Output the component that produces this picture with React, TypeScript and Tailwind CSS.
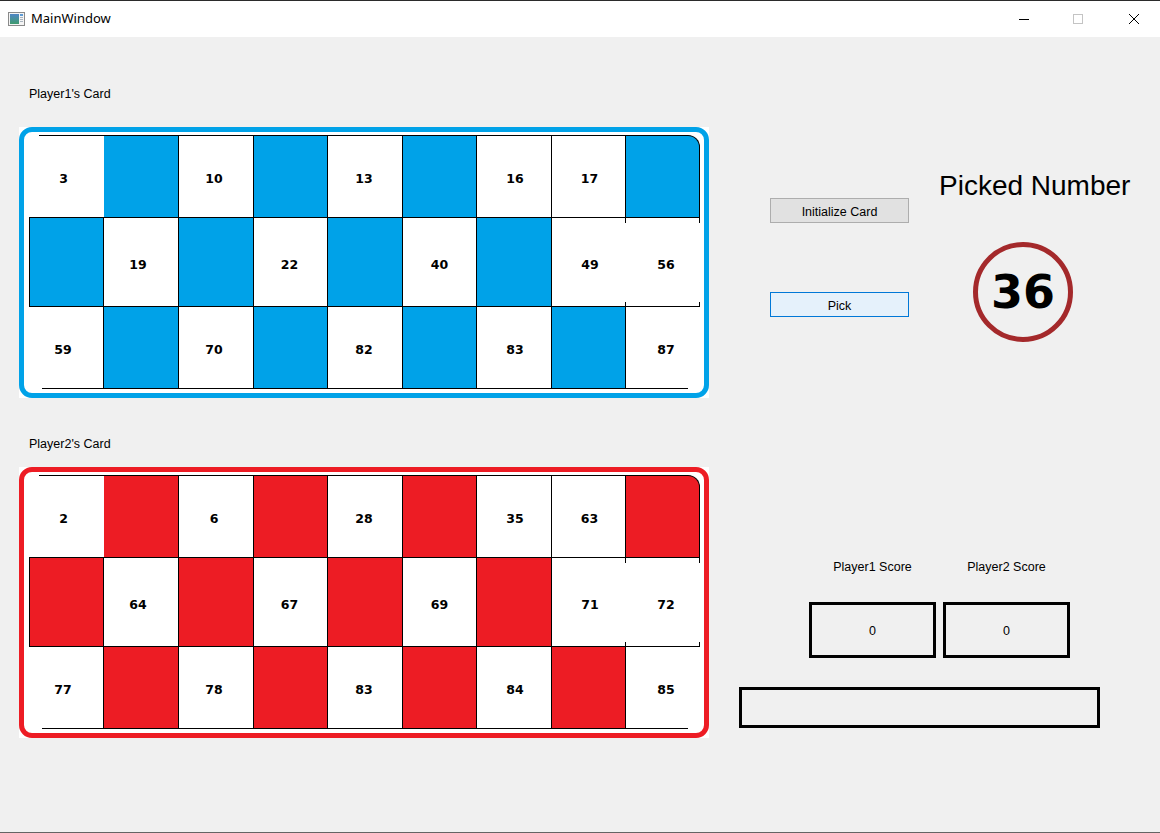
import React from "react";

type Cell = number | null;

const player1: Cell[][] = [
  [3, null, 10, null, 13, null, 16, 17, null],
  [null, 19, null, 22, null, 40, null, 49, 56],
  [59, null, 70, null, 82, null, 83, null, 87],
];

const player2: Cell[][] = [
  [2, null, 6, null, 28, null, 35, 63, null],
  [null, 64, null, 67, null, 69, null, 71, 72],
  [77, null, 78, null, 83, null, 84, null, 85],
];

// numbers don't sit in the middle of the drawn cells, they follow an even 75.4px step
const nudge = ["pr-[6px]", "pr-[6px]", "pr-[4px]", "pr-[2px]", "pr-[2px]", "", "pl-[2px]", "pl-[2px]", "pl-[6px]"];

function cellBorder(r: number, c: number) {
  if (r === 0) {
    if (c === 0) return "border-b";
    if (c === 8) return "border-t border-b border-r rounded-tr-[12px]";
    return "border-t border-b border-r";
  }
  if (r === 1) {
    if (c === 0) return "border-l border-r border-b";
    if (c === 7 || c === 8) return "border-b";
    return "border-r border-b";
  }
  if (c === 0) return "border-r";
  if (c === 8) return "";
  return "border-r border-b";
}

function BingoCell({ value, r, c, fill }: { value: Cell; r: number; c: number; fill: string }) {
  const tick = r === 1 && (c === 7 || c === 8);
  return (
    <div className={`flex flex-col border-black ${cellBorder(r, c)} ${value === null ? fill : "bg-white"}`}>
      {r === 0 && c === 0 ? <div className="ml-[10px] h-px bg-black" /> : null}
      {tick ? (
        <div className="flex h-[5px] justify-end">
          <div className="w-px bg-black" />
        </div>
      ) : null}
      <div
        className={`flex flex-1 items-center justify-center pt-[6px] ${nudge[c]} font-['DejaVu_Sans',sans-serif] text-[12.5px] font-bold text-black`}
      >
        {value}
      </div>
      {tick ? (
        <div className="flex h-[4px] justify-end">
          <div className="w-px bg-black" />
        </div>
      ) : null}
      {r === 2 && c === 0 ? <div className="ml-[13px] h-px bg-black" /> : null}
      {r === 2 && c === 8 ? <div className="mr-[12px] h-px bg-black" /> : null}
    </div>
  );
}

function Card({ cells, ring, fill }: { cells: Cell[][]; ring: string; fill: string }) {
  return (
    <div className="w-[690px] bg-white">
      <div className={`rounded-[13px] border-[5px] ${ring} pt-[3px] pr-[4px] pb-[4px] pl-[5px]`}>
        <div className="grid grid-cols-[75px_75px_75px_74px_75px_74px_75px_74px_74px] grid-rows-[83px_89px_82px]">
          {cells.map((row, r) =>
            row.map((value, c) => <BingoCell key={`${r}-${c}`} value={value} r={r} c={c} fill={fill} />)
          )}
        </div>
      </div>
    </div>
  );
}

function WindowIcon() {
  return (
    <svg width="17" height="14" viewBox="0 0 17 14">
      <defs>
        <linearGradient id="wi" x1="0" y1="0" x2="0" y2="1">
          <stop offset="0" stopColor="#4f86c6" />
          <stop offset="1" stopColor="#3f9b6e" />
        </linearGradient>
      </defs>
      <rect x="0.5" y="0.5" width="16" height="13" fill="#f4f4f4" stroke="#8a8a8a" />
      <rect x="2" y="2" width="9" height="10" fill="url(#wi)" />
      <rect x="12" y="2" width="3" height="2" fill="#5d9bd5" />
      <rect x="12" y="5" width="3" height="1" fill="#a9b4bf" />
      <rect x="12" y="7" width="3" height="1" fill="#a9b4bf" />
      <rect x="12" y="9" width="3" height="1" fill="#a9b4bf" />
    </svg>
  );
}

export default function App() {
  return (
    <div className="flex h-[833px] w-[1160px] flex-col overflow-hidden bg-[#f0f0f0] font-['Liberation_Sans',Arial,sans-serif] text-black">
      <div className="h-px bg-[#2b2b2b]" />
      <div className="flex h-[36px] items-center bg-white">
        <div className="ml-[8px]">
          <WindowIcon />
        </div>
        <span className="ml-[6px] font-['Noto_Sans',sans-serif] text-[13px] text-black">MainWindow</span>
        <div className="ml-auto mr-[21px] flex items-center">
          <div className="h-px w-[10px] bg-black" />
          <svg className="ml-[44px]" width="10" height="10" viewBox="0 0 10 10">
            <rect x="0.5" y="0.5" width="9" height="9" fill="none" stroke="#c4c4c4" />
          </svg>
          <svg className="ml-[46px]" width="10" height="10" viewBox="0 0 10 10">
            <path d="M0 0L10 10M10 0L0 10" stroke="#000" strokeWidth="1" />
          </svg>
        </div>
      </div>

      <div className="flex flex-1">
        <div className="flex w-[709px] flex-col pl-[19px]">
          <div className="mt-[50px] pl-[10px] text-[12.5px] leading-[15px]">Player1's Card</div>
          <div className="mt-[25px]">
            <Card cells={player1} ring="border-[#00a2e8]" fill="bg-[#00a2e8]" />
          </div>
          <div className="mt-[39px] pl-[10px] text-[12.5px] leading-[15px]">Player2's Card</div>
          <div className="mt-[15px]">
            <Card cells={player2} ring="border-[#ed1c24]" fill="bg-[#ed1c24]" />
          </div>
        </div>

        <div className="flex flex-1 flex-col">
          <div className="mt-[133px] flex items-start">
            <div className="ml-[61px] flex w-[139px] flex-col pt-[28px]">
              <button
                type="button"
                className="h-[25px] border border-[#adadad] bg-[#e1e1e1] pt-[4px] text-[12.5px] text-black"
              >
                Initialize Card
              </button>
              <button
                type="button"
                className="mt-[69px] h-[25px] border border-[#0078d7] bg-[#e5f1fb] pt-[4px] text-[12.5px] text-black"
              >
                Pick
              </button>
            </div>
            <div className="ml-[30px] flex flex-col">
              <div className="text-[28px] leading-[32px]">Picked Number</div>
              <div className="ml-[34px] mt-[40px] flex h-[100px] w-[100px] items-center justify-center rounded-full border-[5px] border-[#a4292b]">
                <span className="font-['DejaVu_Sans',sans-serif] text-[46px] font-bold leading-none">36</span>
              </div>
            </div>
          </div>

          <div className="ml-[100px] mt-[218px] flex gap-[7px]">
            {["Player1 Score", "Player2 Score"].map((label) => (
              <div key={label} className="flex w-[127px] flex-col items-center">
                <div className="text-[12.5px] leading-[15px]">{label}</div>
                <div className="mt-[27px] flex h-[56px] w-[127px] items-center justify-center border-[3px] border-black pt-[2px] text-[12.5px]">
                  0
                </div>
              </div>
            ))}
          </div>

          <div className="ml-[30px] mt-[29px] h-[41px] w-[361px] border-[3px] border-black" />
        </div>
      </div>
      <div className="h-px bg-[#646464]" />
    </div>
  );
}
